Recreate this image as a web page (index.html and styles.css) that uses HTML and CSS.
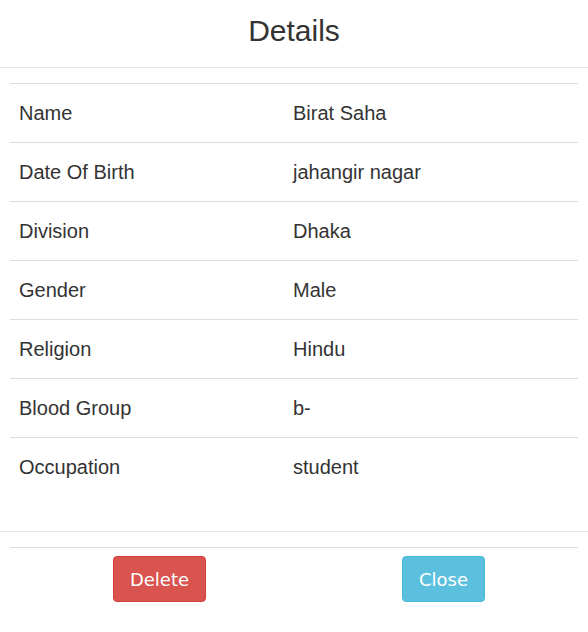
FILE: index.html
```html
<!DOCTYPE html>
<html>
<head>
<meta charset="utf-8">
<link rel="stylesheet" href="styles.css">
</head>
<body>
<div class="modal">
  <div class="modal-header">
    <h4 class="modal-title">Details</h4>
  </div>
  <div class="modal-body">
    <table class="details">
      <tbody>
        <tr><td class="label">Name</td><td>Birat Saha</td></tr>
        <tr><td class="label">Date Of Birth</td><td>jahangir nagar</td></tr>
        <tr><td class="label">Division</td><td>Dhaka</td></tr>
        <tr><td class="label">Gender</td><td>Male</td></tr>
        <tr><td class="label">Religion</td><td>Hindu</td></tr>
        <tr><td class="label">Blood Group</td><td>b-</td></tr>
        <tr><td class="label">Occupation</td><td>student</td></tr>
      </tbody>
    </table>
  </div>
  <div class="modal-footer">
    <div class="actions">
      <div class="action-cell"><button class="btn btn-danger">Delete</button></div>
      <div class="action-cell"><button class="btn btn-info">Close</button></div>
    </div>
  </div>
</div>
</body>
</html>
```

FILE: styles.css
```css
html, body {
  margin: 0;
  padding: 0;
  background: #fff;
}

body {
  font-family: "Liberation Sans", Arial, sans-serif;
  color: #333;
  font-size: 20px;
}

.modal {
  width: 588px;
}

.modal-header {
  padding: 14px 15px 20px;
  border-bottom: 1px solid #e5e5e5;
  text-align: center;
}

.modal-title {
  margin: 0;
  font-size: 30px;
  font-weight: normal;
  line-height: 33px;
}

.modal-body {
  padding: 15px 10px 35px;
}

.details {
  width: 568px;
  border-collapse: collapse;
  border-spacing: 0;
}

.details td {
  border-top: 1px solid #ddd;
  padding: 0 8px;
  height: 58px;
  line-height: 28px;
  vertical-align: middle;
}

.details td.label {
  padding-left: 9px;
  width: 258px;
}

.modal-footer {
  border-top: 1px solid #e5e5e5;
  padding: 15px 10px 21px;
}

.actions {
  display: grid;
  grid-template-columns: 299px 269px;
  border-top: 1px solid #ddd;
}

.action-cell {
  padding: 8px;
  text-align: center;
}

.btn {
  font-family: "DejaVu Sans", Verdana, sans-serif;
  font-size: 18px;
  line-height: 26px;
  padding: 10px 16px 8px;
  border: 1px solid transparent;
  border-radius: 4px;
  color: #fff;
  cursor: pointer;
}

.btn-danger {
  background: #d9534f;
  border-color: #d43f3a;
}

.btn-info {
  background: #5bc0de;
  border-color: #46b8da;
}
```
